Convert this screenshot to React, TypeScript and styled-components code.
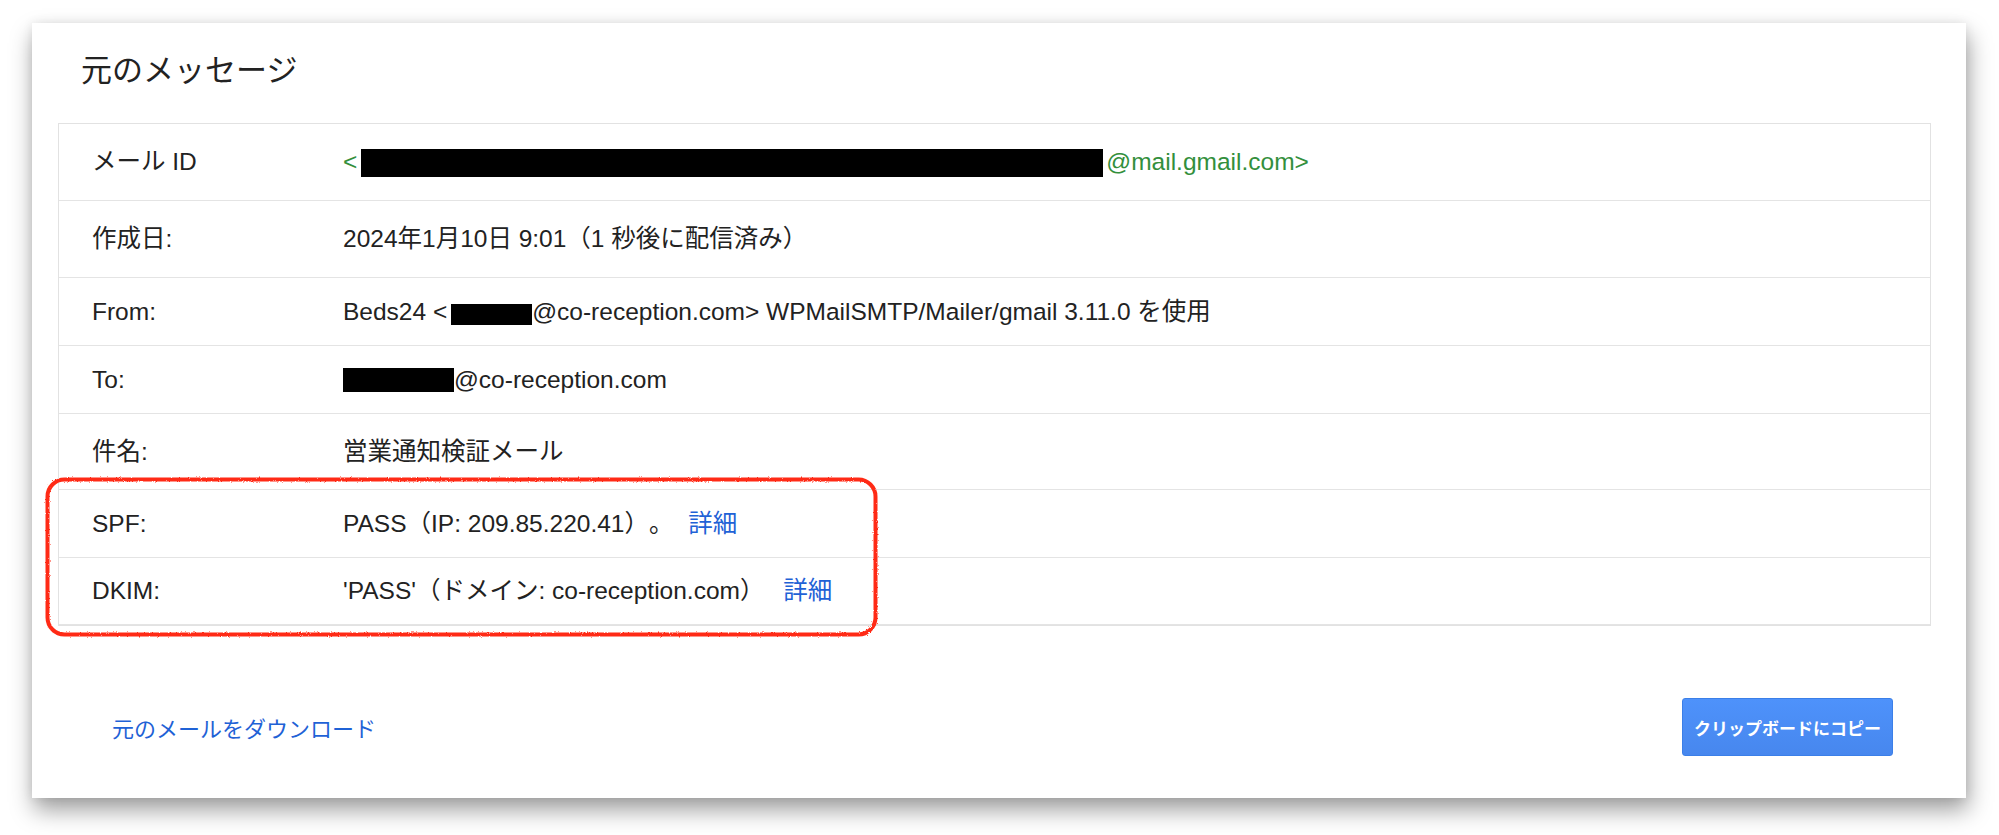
import React from "react";
import styled, { createGlobalStyle } from "styled-components";

const GlobalStyle = createGlobalStyle`
  html, body {
    margin: 0;
    padding: 0;
    background: #ffffff;
  }
  body {
    font-family: "Liberation Sans", "Noto Sans CJK JP", sans-serif;
    color: #222222;
  }
  * {
    box-sizing: border-box;
  }
`;

const Page = styled.div`
  width: 1999px;
  height: 835px;
  padding: 23px 0 0 32px;
  overflow: hidden;
  background: #ffffff;
`;

const Card = styled.section`
  width: 1934px;
  height: 775px;
  background: #ffffff;
  display: flex;
  flex-direction: column;
  box-shadow: 2px 12px 22px rgba(0, 0, 0, 0.38), 0 0 10px rgba(0, 0, 0, 0.08);
`;

const Title = styled.h1`
  margin: 0;
  padding: 22px 0 0 49px;
  font-family: "Noto Sans CJK JP", sans-serif;
  font-size: 31px;
  font-weight: 400;
  line-height: 45px;
  color: #222222;
`;

const Table = styled.div`
  margin: 33px 35px 0 26px;
  border: 1px solid #e2e2e2;
`;

const Row = styled.div<{ $h: number }>`
  display: grid;
  grid-template-columns: 284px 1fr;
  align-items: center;
  height: ${(p) => p.$h}px;
  border-bottom: 1px solid #e4e4e4;
  font-size: 24.5px;
  line-height: 28px;
  text-spacing-trim: space-all;

  &:last-child {
    border-bottom: none;
  }
`;

const Label = styled.div`
  padding-left: 33px;
  color: #222222;
  white-space: nowrap;
`;

const Value = styled.div<{ $tone?: "green" }>`
  color: ${(p) => (p.$tone === "green" ? "#338f3c" : "#222222")};
  white-space: nowrap;
`;

const Redact = styled.span<{ $w: number; $h: number; $drop: number; $ml?: number; $mr?: number }>`
  display: inline-block;
  width: ${(p) => p.$w}px;
  height: ${(p) => p.$h}px;
  vertical-align: ${(p) => -p.$drop}px;
  margin-left: ${(p) => p.$ml ?? 0}px;
  margin-right: ${(p) => p.$mr ?? 0}px;
  background: #000000;
`;

const Detail = styled.a<{ $gap: number }>`
  margin-left: ${(p) => p.$gap}px;
  color: #1f62d6;
  text-decoration: none;
`;

const Marked = styled.div`
  position: relative;
`;

const Outline = styled.svg`
  position: absolute;
  top: -13px;
  left: -14px;
  width: 833px;
  height: 160px;
  overflow: visible;
  pointer-events: none;
`;

const Footer = styled.div`
  display: flex;
  align-items: center;
  justify-content: space-between;
  padding: 72px 73px 0 80px;
`;

const DownloadLink = styled.a`
  font-size: 22px;
  line-height: 28px;
  color: #1f62d6;
  text-decoration: none;
  font-family: "Noto Sans CJK JP", sans-serif;
`;

const CopyButton = styled.button`
  height: 58px;
  padding: 0 11px;
  border: 1px solid #3b7fe8;
  border-radius: 3px;
  background: linear-gradient(#4e92fb, #4787ee);
  color: #ffffff;
  font-family: "Noto Sans CJK JP", sans-serif;
  font-size: 17px;
  font-weight: 700;
  letter-spacing: 0;
  cursor: pointer;
`;

export default function App() {
  return (
    <>
      <GlobalStyle />
      <Page>
        <Card>
          <Title>元のメッセージ</Title>
          <Table>
            <Row $h={77}>
              <Label>メール ID</Label>
              <Value $tone="green">
                &lt;
                <Redact $w={742} $h={28} $drop={7} $ml={4} $mr={3} />
                @mail.gmail.com&gt;
              </Value>
            </Row>
            <Row $h={77}>
              <Label>作成日:</Label>
              <Value>2024年1月10日 9:01（1 秒後に配信済み）</Value>
            </Row>
            <Row $h={68}>
              <Label>From:</Label>
              <Value>
                Beds24 &lt;
                <Redact $w={81} $h={21} $drop={5} $ml={4} />
                @co-reception.com&gt; WPMailSMTP/Mailer/gmail 3.11.0 を使用
              </Value>
            </Row>
            <Row $h={68}>
              <Label>To:</Label>
              <Value>
                <Redact $w={111} $h={24} $drop={4} />
                @co-reception.com
              </Value>
            </Row>
            <Row $h={76}>
              <Label>件名:</Label>
              <Value>営業通知検証メール</Value>
            </Row>
            <Marked>
              <Row $h={68}>
                <Label>SPF:</Label>
                <Value>
                  PASS（IP: 209.85.220.41）。 <Detail href="#" $gap={8}>詳細</Detail>
                </Value>
              </Row>
              <Row $h={67}>
                <Label>DKIM:</Label>
                <Value>
                  'PASS'（ドメイン: co-reception.com） <Detail href="#" $gap={12}>詳細</Detail>
                </Value>
              </Row>
              <Outline viewBox="0 0 833 160">
                <defs>
                  <filter id="rough" x="-5%" y="-10%" width="110%" height="120%">
                    <feTurbulence type="fractalNoise" baseFrequency="0.9" numOctaves="2" seed="4" />
                    <feDisplacementMap in="SourceGraphic" scale="2.5" />
                  </filter>
                </defs>
                <rect
                  x="2.5"
                  y="2.5"
                  width="828"
                  height="155"
                  rx="17"
                  fill="none"
                  stroke="#ff2a14"
                  strokeWidth="4"
                  filter="url(#rough)"
                />
              </Outline>
            </Marked>
          </Table>
          <Footer>
            <DownloadLink href="#">元のメールをダウンロード</DownloadLink>
            <CopyButton type="button">クリップボードにコピー</CopyButton>
          </Footer>
        </Card>
      </Page>
    </>
  );
}
